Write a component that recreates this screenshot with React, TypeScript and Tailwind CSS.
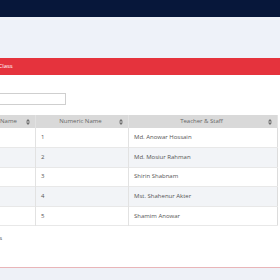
import React from "react";

const rows = [
  { numeric: "1", teacher: "Md. Anowar Hossain" },
  { numeric: "2", teacher: "Md. Mosiur Rahman" },
  { numeric: "3", teacher: "Shirin Shabnam" },
  { numeric: "4", teacher: "Mst. Shahenur Akter" },
  { numeric: "5", teacher: "Shamim Anowar" },
];

function SortIcon() {
  return (
    <svg width="4" height="6" viewBox="0 0 4 6" className="shrink-0">
      <path d="M2 0 L4 2.5 H0 Z" fill="#6b6b6b" />
      <path d="M2 6 L4 3.5 H0 Z" fill="#6b6b6b" />
    </svg>
  );
}

function HeaderCell({ label, width }: { label: string; width: string }) {
  return (
    <th
      className={`${width} h-[13px] border-r border-[#e2e2e2] bg-[#d9d9d9] p-0 font-normal`}
    >
      <div className="flex items-center pl-[6px] pr-[5px]">
        <span className="flex-1 text-center">{label}</span>
        <SortIcon />
      </div>
    </th>
  );
}

export default function App() {
  return (
    <div
      className="w-[280px] h-[280px] overflow-hidden bg-[#eef1f7] text-[6px] text-[#555]"
      style={{ fontFamily: "'Open Sans', 'Liberation Sans', sans-serif" }}
    >
      <div className="h-[17px] bg-[#07173a]" />
      <div className="h-[41px] bg-[#eef2f9]" />

      <div className="-ml-[40px] w-[320px] bg-white border-b border-[#e9b5b8]">
        <div className="h-[17px] bg-[#e5333d] flex items-center pl-[30px] text-white">
          All Class
        </div>

        <div className="pt-[18px] pl-[8px]">
          <div className="flex items-center">
            <input
              type="text"
              className="h-[12px] w-[80px] ml-[18px] border border-[#cfcfcf] bg-white outline-none"
            />
          </div>

          <table className="mt-[10px] table-fixed border-collapse border-l border-r border-[#dcdcdc] text-[#666]">
            <thead>
              <tr>
                <HeaderCell label="Class Name" width="w-[67px]" />
                <HeaderCell label="Numeric Name" width="w-[93px]" />
                <HeaderCell label="Teacher & Staff" width="w-[149px]" />
              </tr>
            </thead>
            <tbody className="text-[#555]">
              {rows.map((r, i) => (
                <tr
                  key={r.numeric}
                  className={`h-[19.6px] border-b border-[#e8e8e8] ${
                    i % 2 === 1 ? "bg-[#f2f4f7]" : "bg-white"
                  }`}
                >
                  <td className="border-r border-[#e2e2e2] px-[5px]"></td>
                  <td className="border-r border-[#e2e2e2] px-[5px]">
                    {r.numeric}
                  </td>
                  <td className="px-[5px]">{r.teacher}</td>
                </tr>
              ))}
            </tbody>
          </table>

          <div className="h-[41px] pt-[8px] -ml-[40px] whitespace-nowrap">
            Showing 1 to 5 of 5 entries
          </div>
        </div>
      </div>
    </div>
  );
}
